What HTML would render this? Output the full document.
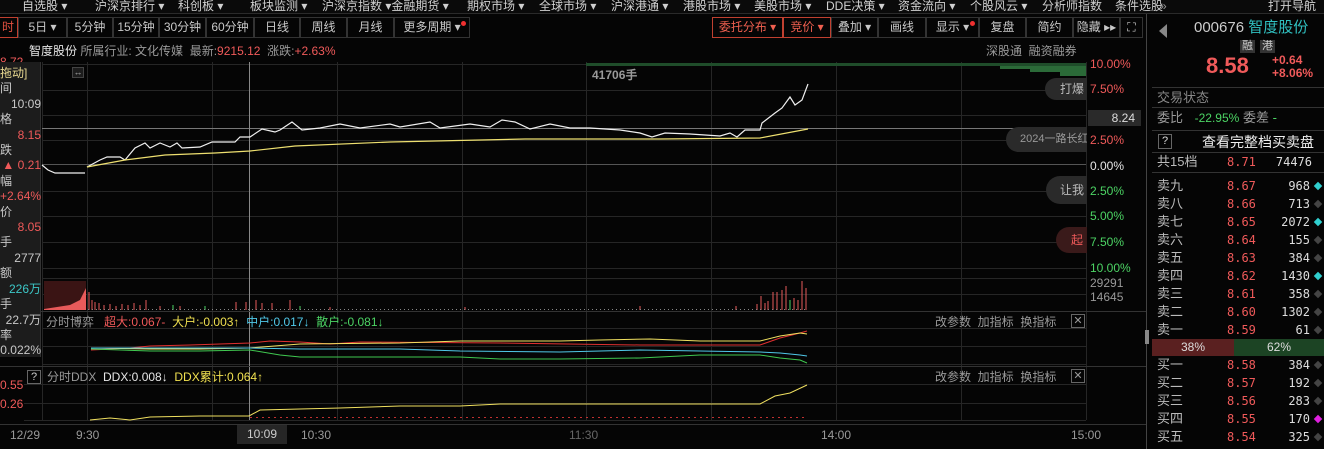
<!DOCTYPE html>
<html><head><meta charset="utf-8"><style>
*{margin:0;padding:0;box-sizing:border-box}
body{width:1324px;height:449px;background:#050505;overflow:hidden;position:relative;font-family:"Liberation Sans","Noto Sans CJK SC",sans-serif;font-size:12px;color:#c8c8c8}
.a{position:absolute;white-space:nowrap;line-height:1}
.btn{position:absolute;top:17px;height:21px;border:1px solid #333;color:#c8c8c8;font-size:12px;line-height:19px;text-align:center}
.r{color:#f05a5a}.g{color:#4cd464}.w{color:#e6e6e6}.gr{color:#9a9a9a}.c{color:#3cc8c8}.y{color:#f0e050}
.row{position:absolute;left:1157px;width:167px;height:18px;font-size:13px;line-height:18px}
.row .l{position:absolute;left:0;color:#bbb}
.row .p{position:absolute;left:70px;color:#f05a5a;font-family:"DejaVu Sans Mono","Liberation Mono",monospace;font-size:12px}
.row .q{position:absolute;right:14px;color:#ddd;font-family:"DejaVu Sans Mono","Liberation Mono",monospace;font-size:12px}
.row .d{position:absolute;right:3px;top:6px;width:6px;height:6px;background:#444;transform:rotate(45deg)}
.pill{position:absolute;background:#2a2a2a;border-radius:14px 0 0 14px;color:#bbb;font-size:12px;line-height:1;white-space:nowrap;overflow:hidden}
</style></head><body>
<div class="a" style="left:0;top:0;width:1324px;height:14px;background:#0a0a0a;border-bottom:1px solid #2a2a2a"></div>
<div class="a" style="top:0;left:22px;color:#d0d0d0">自选股 ▾</div>
<div class="a" style="top:0;left:95px;color:#d0d0d0">沪深京排行 ▾</div>
<div class="a" style="top:0;left:178px;color:#d0d0d0">科创板 ▾</div>
<div class="a" style="top:0;left:250px;color:#d0d0d0">板块监测 ▾</div>
<div class="a" style="top:0;left:322px;color:#d0d0d0">沪深京指数 ▾金融期货 ▾</div>
<div class="a" style="top:0;left:467px;color:#d0d0d0">期权市场 ▾</div>
<div class="a" style="top:0;left:539px;color:#d0d0d0">全球市场 ▾</div>
<div class="a" style="top:0;left:611px;color:#d0d0d0">沪深港通 ▾</div>
<div class="a" style="top:0;left:683px;color:#d0d0d0">港股市场 ▾</div>
<div class="a" style="top:0;left:754px;color:#d0d0d0">美股市场 ▾</div>
<div class="a" style="top:0;left:826px;color:#d0d0d0">DDE决策 ▾</div>
<div class="a" style="top:0;left:898px;color:#d0d0d0">资金流向 ▾</div>
<div class="a" style="top:0;left:970px;color:#d0d0d0">个股风云 ▾</div>
<div class="a" style="top:0;left:1042px;color:#d0d0d0">分析师指数</div>
<div class="a" style="top:0;left:1115px;color:#d0d0d0">条件选股</div>
<div class="a" style="top:0;left:1160px;color:#999">»</div>
<div class="a" style="top:0;left:1268px;color:#d0d0d0">打开导航</div>
<div class="btn" style="left:-2px;width:20px;border-color:#c04030;color:#e05040">时</div>
<div class="btn" style="left:18px;width:49px">5日 ▾</div>
<div class="btn" style="left:67px;width:46px">5分钟</div>
<div class="btn" style="left:113px;width:46px">15分钟</div>
<div class="btn" style="left:159px;width:47px">30分钟</div>
<div class="btn" style="left:206px;width:48px">60分钟</div>
<div class="btn" style="left:254px;width:46px">日线</div>
<div class="btn" style="left:300px;width:47px">周线</div>
<div class="btn" style="left:347px;width:47px">月线</div>
<div class="btn" style="left:394px;width:76px">更多周期 ▾<span style="position:absolute;right:3px;top:3px;width:5px;height:5px;border-radius:3px;background:#f03030"></span></div>
<div class="btn" style="left:712px;width:71px;border-color:#c04030;color:#f06050">委托分布 ▾</div>
<div class="btn" style="left:783px;width:48px;border-color:#c04030;color:#f06050">竞价 ▾</div>
<div class="btn" style="left:831px;width:47px">叠加 ▾</div>
<div class="btn" style="left:878px;width:48px">画线</div>
<div class="btn" style="left:926px;width:53px">显示 ▾<span style="position:absolute;right:3px;top:3px;width:5px;height:5px;border-radius:3px;background:#f03030"></span></div>
<div class="btn" style="left:979px;width:47px">复盘</div>
<div class="btn" style="left:1026px;width:47px">简约</div>
<div class="btn" style="left:1073px;width:47px">隐藏 ▸▸</div>
<div class="btn" style="left:1120px;width:23px">⛶</div>
<div class="a" style="left:29px;top:45px"><span class="w">智度股份</span> <span class="gr">所属行业: 文化传媒</span> &nbsp;<span class="gr">最新:</span><span class="r">9215.12</span> &nbsp;<span class="gr">涨跌:</span><span class="r">+2.63%</span></div>
<div class="a gr" style="left:986px;top:45px">深股通 &nbsp;融资融券</div>

<svg class="a" style="left:0;top:0" width="1148" height="449" viewBox="0 0 1148 449">
<g stroke="#262626" stroke-width="1" fill="none">
<line x1="42" y1="64.5" x2="1086" y2="64.5"/><line x1="42" y1="90.5" x2="1086" y2="90.5"/><line x1="42" y1="115.5" x2="1086" y2="115.5"/><line x1="42" y1="140.5" x2="1086" y2="140.5"/><line x1="42" y1="191.5" x2="1086" y2="191.5"/><line x1="42" y1="216.5" x2="1086" y2="216.5"/><line x1="42" y1="242.5" x2="1086" y2="242.5"/><line x1="42" y1="268.5" x2="1086" y2="268.5"/>
<line x1="42" y1="278.5" x2="1086" y2="278.5"/><line x1="42" y1="294.5" x2="1086" y2="294.5"/>
<line x1="42" y1="328.5" x2="1086" y2="328.5"/><line x1="42" y1="346.5" x2="1086" y2="346.5"/><line x1="42" y1="364.5" x2="1086" y2="364.5"/>
<line x1="24" y1="384.5" x2="1086" y2="384.5"/><line x1="24" y1="403.5" x2="1086" y2="403.5"/><line x1="24" y1="420.5" x2="1086" y2="420.5"/>
<line x1="42.5" y1="62" x2="42.5" y2="420"/>
<line x1="87.5" y1="62" x2="87.5" y2="420"/><line x1="212.5" y1="62" x2="212.5" y2="420"/><line x1="337.5" y1="62" x2="337.5" y2="420"/><line x1="462.5" y1="62" x2="462.5" y2="420"/><line x1="586.5" y1="62" x2="586.5" y2="420"/><line x1="711.5" y1="62" x2="711.5" y2="420"/><line x1="836.5" y1="62" x2="836.5" y2="420"/><line x1="961.5" y1="62" x2="961.5" y2="420"/><line x1="1086.5" y1="62" x2="1086.5" y2="420"/>
</g>
<line x1="42" y1="164.5" x2="1086" y2="164.5" stroke="#555"/>
<line x1="42" y1="128.5" x2="1086" y2="128.5" stroke="#777"/>
<line x1="249.5" y1="62" x2="249.5" y2="420" stroke="#888"/>
<line x1="0" y1="311.5" x2="1146" y2="311.5" stroke="#333"/>
<line x1="0" y1="366.5" x2="1146" y2="366.5" stroke="#333"/>
<line x1="0" y1="424.5" x2="1146" y2="424.5" stroke="#333"/>
<line x1="1146.5" y1="14" x2="1146.5" y2="449" stroke="#444"/>
<rect x="586" y="63" width="500" height="3" fill="#1f4d2a"/>
<path d="M1000 66H1086V76H1060V72H1030V69H1000Z" fill="#2b6a38"/>
<polyline fill="none" stroke="#f0f0f0" stroke-width="1.2" points="42,165 48,170 55,173 85,173"/>
<polyline fill="none" stroke="#f0f0f0" stroke-width="1.2" points="87,167 100,160 107,157 120,157 125,160 135,148 145,143 150,148 160,143 170,147 177,143 182,148 200,147 212,142 235,142 240,137 250,137 262,129 275,132 280,130 292,122 302,130 320,128 340,124 360,128 390,124 400,127 430,122 440,128 470,124 490,127 502,120 515,122 530,129 550,124 570,128 590,128 620,130 640,133 652,137 665,133 690,134 720,136 730,133 737,137 745,130 760,130 762,123 775,113 782,108 790,97 795,105 802,100 808,84"/>
<polyline fill="none" stroke="#eee070" stroke-width="1.2" points="87,167 125,160 165,155 215,153 250,151 295,146 390,142 525,139 660,139 760,138 808,129"/>
<path d="M44 281H86V310H44Z" fill="#3a1414"/>
<path d="M44 309L70 305L80 300L86 288V310H44Z" fill="#e85a5a"/>
<g stroke="#e85a5a" stroke-width="1">
<line x1="89" y1="310" x2="89" y2="292"/><line x1="92" y1="310" x2="92" y2="300"/><line x1="95" y1="310" x2="95" y2="302"/><line x1="99" y1="310" x2="99" y2="303"/><line x1="104" y1="310" x2="104" y2="305"/><line x1="110" y1="310" x2="110" y2="304"/><line x1="116" y1="310" x2="116" y2="306"/><line x1="122" y1="310" x2="122" y2="304"/><line x1="128" y1="310" x2="128" y2="305"/><line x1="134" y1="310" x2="134" y2="303"/><line x1="140" y1="310" x2="140" y2="305"/><line x1="146" y1="310" x2="146" y2="300"/><line x1="160" y1="310" x2="160" y2="306"/><line x1="180" y1="310" x2="180" y2="306"/><line x1="236" y1="310" x2="236" y2="302"/><line x1="246" y1="310" x2="246" y2="302"/><line x1="256" y1="310" x2="256" y2="300"/><line x1="262" y1="310" x2="262" y2="303"/><line x1="272" y1="310" x2="272" y2="303"/><line x1="290" y1="310" x2="290" y2="300"/><line x1="330" y1="310" x2="330" y2="307"/><line x1="465" y1="310" x2="465" y2="307"/><line x1="640" y1="310" x2="640" y2="306"/><line x1="736" y1="310" x2="736" y2="306"/>
<line x1="757" y1="310" x2="757" y2="304"/><line x1="761" y1="310" x2="761" y2="296"/><line x1="765" y1="310" x2="765" y2="303"/><line x1="768" y1="310" x2="768" y2="301"/><line x1="773" y1="310" x2="773" y2="292"/><line x1="777" y1="310" x2="777" y2="292"/><line x1="782" y1="310" x2="782" y2="290"/><line x1="786" y1="310" x2="786" y2="286"/><line x1="794" y1="310" x2="794" y2="298"/><line x1="798" y1="310" x2="798" y2="300"/><line x1="802" y1="310" x2="802" y2="281"/><line x1="806" y1="310" x2="806" y2="288"/>
</g>
<g stroke="#4cd464"><line x1="790" y1="310" x2="790" y2="300"/><line x1="173" y1="310" x2="173" y2="305"/><line x1="205" y1="310" x2="205" y2="306"/><line x1="300" y1="310" x2="300" y2="306"/></g>
<line x1="88" y1="309.5" x2="806" y2="309.5" stroke="#888" stroke-dasharray="1,3"/>
<polyline fill="none" stroke="#e03030" points="91,350 130,348 150,346 190,345 250,343 270,341 300,342 330,344 360,342 500,343 640,345 700,345 760,345 780,338 800,333 807,331"/>
<polyline fill="none" stroke="#f0e060" points="91,348 150,349 200,349 249,348 300,344 400,343 460,341 500,341 560,341 600,340 650,339 700,341 760,341 780,336 800,333 807,334"/>
<polyline fill="none" stroke="#50c8e8" points="91,348 150,348 250,348 300,349 400,349 460,351 560,352 640,350 700,351 760,352 780,353 800,355 807,356"/>
<polyline fill="none" stroke="#40c850" points="91,349 150,351 200,351 250,350 280,355 300,357 400,357 460,357 500,359 560,359 640,358 700,355 760,355 780,358 800,360 807,363"/>
<polyline fill="none" stroke="#f0e060" points="90,420 110,418 130,420 150,417 200,416 249,416 260,410 300,409 340,408 400,406 460,406 500,404 540,404 760,404 775,396 790,393 807,385"/>
<line x1="250" y1="417.5" x2="807" y2="417.5" stroke="#c03030" stroke-dasharray="2,4"/>
</svg>

<div class="a r" style="left:1090px;top:58px">10.00%</div>
<div class="a r" style="left:1090px;top:83px">7.50%</div>
<div class="a" style="left:1088px;top:110px;width:53px;height:16px;background:#2a2a2a;color:#ddd;text-align:right;padding-right:6px;line-height:16px">8.24</div>
<div class="a r" style="left:1090px;top:134px">2.50%</div>
<div class="a w" style="left:1090px;top:160px">0.00%</div>
<div class="a g" style="left:1090px;top:185px">2.50%</div>
<div class="a g" style="left:1090px;top:210px">5.00%</div>
<div class="a g" style="left:1090px;top:236px">7.50%</div>
<div class="a g" style="left:1090px;top:262px">10.00%</div>
<div class="a gr" style="left:1090px;top:277px">29291</div>
<div class="a gr" style="left:1090px;top:291px">14645</div>
<div class="a" style="left:592px;top:69px;color:#999;font-weight:bold">41706手</div>
<div class="pill" style="left:1045px;top:78px;width:42px;height:22px;padding:5px 0 0 15px">打爆</div>
<div class="pill" style="left:1006px;top:127px;width:81px;height:25px;padding:7px 0 0 14px;font-size:11px;color:#999">2024一路长红</div>
<div class="pill" style="left:1046px;top:176px;width:41px;height:28px;padding:8px 0 0 14px">让我</div>
<div class="pill" style="left:1056px;top:227px;width:31px;height:26px;padding:7px 0 0 15px;background:#3a1a1a;color:#f05a5a">起</div>
<div class="a gr" style="left:46px;top:316px">分时博弈 &nbsp; <span class="r">超大:0.067-</span> &nbsp;<span class="y">大户:-0.003↑</span> &nbsp;<span style="color:#50c8e8">中户:0.017↓</span> &nbsp;<span class="g">散户:-0.081↓</span></div>
<div class="a gr" style="left:935px;top:316px">改参数 &nbsp;加指标 &nbsp;换指标</div>
<div class="a" style="left:1071px;top:314px;width:14px;height:14px;border:1px solid #666;color:#999;font-size:11px;text-align:center;line-height:12px">✕</div>
<div class="a" style="left:27px;top:370px;width:14px;height:14px;border:1px solid #666;color:#ccc;font-size:11px;text-align:center;line-height:12px">?</div>
<div class="a gr" style="left:47px;top:371px">分时DDX &nbsp;<span class="w">DDX:0.008↓</span> &nbsp;<span class="y">DDX累计:0.064↑</span></div>
<div class="a gr" style="left:935px;top:371px">改参数 &nbsp;加指标 &nbsp;换指标</div>
<div class="a" style="left:1071px;top:369px;width:14px;height:14px;border:1px solid #666;color:#999;font-size:11px;text-align:center;line-height:12px">✕</div>
<div class="a r" style="left:0;top:379px">0.55</div>
<div class="a r" style="left:0;top:398px">0.26</div>
<div class="a r" style="left:0;top:56px;height:6px;overflow:hidden">8.72</div>
<div class="a gr" style="left:10px;top:429px">12/29</div>
<div class="a gr" style="left:76px;top:429px">9:30</div>
<div class="a" style="left:237px;top:425px;width:50px;height:19px;background:#262626;color:#ccc;text-align:center;line-height:19px">10:09</div>
<div class="a gr" style="left:301px;top:429px">10:30</div>
<div class="a" style="left:569px;top:429px;color:#666">11:30</div>
<div class="a gr" style="left:821px;top:429px">14:00</div>
<div class="a gr" style="left:1071px;top:429px">15:00</div>
<div class="a" style="left:0;top:62px;width:41px;height:295px;background:#1c1c1c;border-right:1px solid #333"></div>
<div class="a" style="left:0;top:66px;width:41px;font-size:12px;line-height:15.4px">
<div style="color:#e8d890">拖动]</div>
<div>间</div><div style="text-align:right">10:09</div>
<div>格</div><div class="r" style="text-align:right">8.15</div>
<div>跌</div><div class="r" style="text-align:right">▲ 0.21</div>
<div>幅</div><div class="r" style="text-align:right">+2.64%</div>
<div>价</div><div class="r" style="text-align:right">8.05</div>
<div>手</div><div style="text-align:right">2777</div>
<div>额</div><div class="c" style="text-align:right">226万</div>
<div>手</div><div style="text-align:right">22.7万</div>
<div>率</div><div style="text-align:right">0.022%</div>
</div>
<div class="a" style="left:72px;top:67px;width:12px;height:11px;border:1px solid #444;background:#1c1c1c;color:#aaa;font-size:9px;text-align:center;line-height:9px">↔</div>

<div class="a" style="left:1159px;top:24px;width:0;height:0;border-top:7px solid transparent;border-bottom:7px solid transparent;border-right:8px solid #888"></div>
<div class="a" style="left:1194px;top:20px;font-size:15px;color:#ccc">000676 <span style="color:#30c0c0">智度股份</span></div>
<div class="a" style="left:1240px;top:40px;background:#333;color:#ccc;font-size:11px;padding:1px 2px">融</div>
<div class="a" style="left:1260px;top:40px;background:#333;color:#ccc;font-size:11px;padding:1px 2px">港</div>
<div class="a r" style="left:1206px;top:55px;font-size:22px;font-weight:bold">8.58</div>
<div class="a r" style="left:1272px;top:54px;font-size:12px;font-weight:bold">+0.64</div>
<div class="a r" style="left:1272px;top:67px;font-size:12px;font-weight:bold">+8.06%</div>
<div class="a" style="left:1152px;top:87px;width:172px;border-top:1px solid #333"></div>
<div class="a" style="left:1157px;top:91px;font-size:13px;color:#888">交易状态</div>
<div class="a" style="left:1152px;top:107px;width:172px;border-top:1px solid #333"></div>
<div class="a" style="left:1157px;top:111px;font-size:13px;color:#999">委比 <span class="g" style="font-size:12px;margin-left:8px">-22.95%</span> 委差 <span class="g">-</span></div>
<div class="a" style="left:1152px;top:130px;width:172px;border-top:1px solid #333"></div>
<div class="a" style="left:1158px;top:134px;width:14px;height:15px;border:1px solid #666;color:#ddd;font-size:11px;text-align:center;line-height:13px">?</div>
<div class="a" style="left:1202px;top:135px;font-size:14px;color:#eee">查看完整档买卖盘</div>
<div class="a" style="left:1152px;top:152px;width:172px;border-top:1px solid #333"></div>
<div class="row" style="top:153px"><span class="l g">共15档</span><span class="p">8.71</span><span class="q" style="right:12px">74476</span></div>
<div class="a" style="left:1152px;top:172px;width:172px;border-top:1px solid #333"></div>
<div class="row" style="top:177px"><span class="l">卖九</span><span class="p">8.67</span><span class="q">968</span><span class="d" style="background:#30d0d0"></span></div>
<div class="row" style="top:195px"><span class="l">卖八</span><span class="p">8.66</span><span class="q">713</span><span class="d"></span></div>
<div class="row" style="top:213px"><span class="l">卖七</span><span class="p">8.65</span><span class="q">2072</span><span class="d" style="background:#30d0d0"></span></div>
<div class="row" style="top:231px"><span class="l">卖六</span><span class="p">8.64</span><span class="q">155</span><span class="d"></span></div>
<div class="row" style="top:249px"><span class="l">卖五</span><span class="p">8.63</span><span class="q">384</span><span class="d"></span></div>
<div class="row" style="top:267px"><span class="l">卖四</span><span class="p">8.62</span><span class="q">1430</span><span class="d" style="background:#30d0d0"></span></div>
<div class="row" style="top:285px"><span class="l">卖三</span><span class="p">8.61</span><span class="q">358</span><span class="d"></span></div>
<div class="row" style="top:303px"><span class="l">卖二</span><span class="p">8.60</span><span class="q">1302</span><span class="d"></span></div>
<div class="row" style="top:321px"><span class="l">卖一</span><span class="p">8.59</span><span class="q">61</span><span class="d"></span></div>
<div class="a" style="left:1152px;top:339px;width:82px;height:17px;background:#5a2020;color:#ddd;text-align:center;line-height:17px">38%</div>
<div class="a" style="left:1234px;top:339px;width:90px;height:17px;background:#1c4424;color:#ddd;text-align:center;line-height:17px">62%</div>
<div class="row" style="top:356px"><span class="l">买一</span><span class="p">8.58</span><span class="q">384</span><span class="d"></span></div>
<div class="row" style="top:374px"><span class="l">买二</span><span class="p">8.57</span><span class="q">192</span><span class="d"></span></div>
<div class="row" style="top:392px"><span class="l">买三</span><span class="p">8.56</span><span class="q">283</span><span class="d"></span></div>
<div class="row" style="top:410px"><span class="l">买四</span><span class="p">8.55</span><span class="q">170</span><span class="d" style="background:#e020e0"></span></div>
<div class="row" style="top:428px"><span class="l">买五</span><span class="p">8.54</span><span class="q">325</span><span class="d"></span></div>
<div class="a" style="left:1145px;top:330px;width:4px;height:14px;background:#888"></div>
</body></html>
